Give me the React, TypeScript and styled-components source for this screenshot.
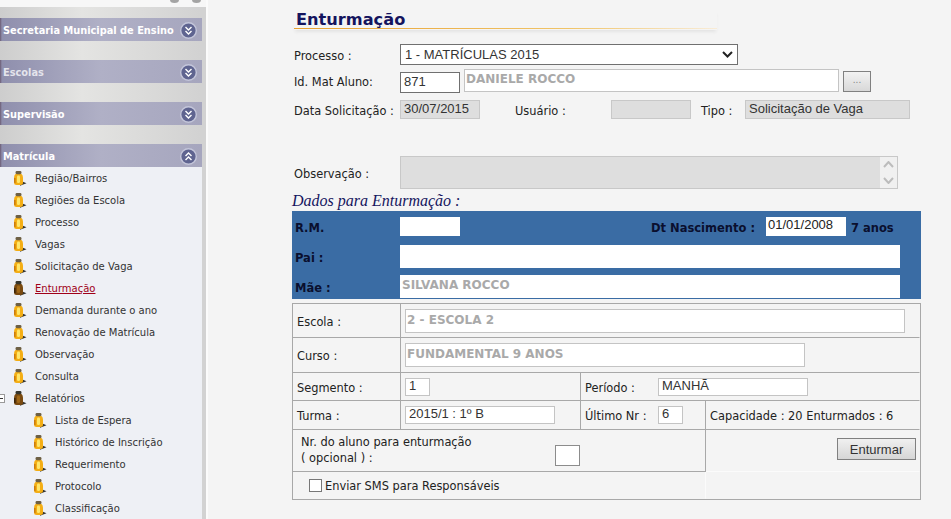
import React from "react";
import styled, { createGlobalStyle } from "styled-components";

const GlobalStyle = createGlobalStyle`
  html, body {
    margin: 0;
    padding: 0;
    background: #f4f4f4;
    overflow: hidden;
  }
  #root { height: 519px; }
`;

const LINE = "#a8a8a8";
const SOFT = "#fbfbfb";

const Page = styled.div`
  display: flex;
  width: 951px;
  height: 519px;
  overflow: hidden;
  font-family: "DejaVu Sans", Verdana, sans-serif;
  font-size: 11.4px;
  color: #222;
`;

const Sidebar = styled.aside`
  position: relative;
  width: 208px;
  flex: none;
  box-sizing: border-box;
  padding-top: 18px;
  height: 519px;
  overflow: hidden;
  border-right: 2px solid #fbfbfb;
  background:
    linear-gradient(#f7f7f7, #f7f7f7) top / 100% 7px no-repeat,
    linear-gradient(90deg, #cdcdcd 0, #e4e4e2 40%, #d2d2d2 97%);
`;

// two cut off badges peeking in at the very top
const TopBlob = styled.span<{ $x: number }>`
  position: absolute;
  top: -3px;
  left: ${(p) => p.$x}px;
  width: 9px;
  height: 6px;
  border-radius: 50%;
  background: #a4a4a4;
`;

const PanelHeader = styled.div<{ $dim?: boolean }>`
  display: flex;
  align-items: center;
  justify-content: space-between;
  width: 202px;
  height: 23px;
  box-sizing: border-box;
  padding: 1px 5px 0 3px;
  margin-bottom: 19px;
  background: linear-gradient(90deg, #6c5c74 0, #8f8fad 2px, #b0b0c6 50%, #a6a6be 100%);
  color: ${(p) => (p.$dim ? "#e4e4ec" : "#fff")};
  font-family: "DejaVu Sans Condensed", "DejaVu Sans", sans-serif;
  font-stretch: condensed;
  font-weight: bold;
  font-size: 10.9px;
  white-space: nowrap;
  &:last-of-type { margin-bottom: 0; }
`;

const MenuList = styled.ul`
  list-style: none;
  width: 202px;
  margin: 0;
  padding: 0;
  background: #eef0f5;
  height: 360px;
`;

const MenuItem = styled.li<{ $sub?: boolean }>`
  position: relative;
  display: flex;
  align-items: center;
  height: 22px;
  padding-left: ${(p) => (p.$sub ? "33px" : "13px")};
  color: #333;
  font-size: 10px;
  white-space: nowrap;
`;

const MenuLabel = styled.span<{ $active?: boolean }>`
  margin-left: 8px;
  color: ${(p) => (p.$active ? "#a00018" : "#333")};
  text-decoration: ${(p) => (p.$active ? "underline" : "none")};
`;

const Expander = styled.span`
  position: absolute;
  left: -4px;
  top: 7px;
  width: 7px;
  height: 7px;
  border: 1px solid #999;
  background: #fff;
  &::after {
    content: "";
    position: absolute;
    left: 1px;
    right: 1px;
    top: 3px;
    height: 1px;
    background: #333;
  }
`;

const Main = styled.main`
  flex: none;
  width: 630px;
  margin-left: 84px;
  padding-top: 10px;
`;

const TitleBlock = styled.div`
  width: 423px;
  margin-left: 2px;
  height: 20px;
  box-sizing: border-box;
  border-bottom: 1px solid transparent;
  background: linear-gradient(90deg, #e8a030, #f0c468 65%, #f8ecd8 100%) bottom / 100% 1px no-repeat;
  box-shadow: 0 3px 3px -1px #e4e4e4;
`;

const Title = styled.h1`
  margin: 0 0 0 2px;
  font-family: "DejaVu Sans", sans-serif;
  font-size: 16.2px;
  line-height: 20px;
  font-weight: bold;
  color: #14145e;
`;

const FormRow = styled.div<{ $h: number; $mt?: number }>`
  display: flex;
  align-items: center;
  height: ${(p) => p.$h}px;
  margin-top: ${(p) => p.$mt ?? 0}px;
  margin-left: 2px;
`;

const Label = styled.label<{ $w?: number; $ml?: number }>`
  flex: none;
  box-sizing: border-box;
  width: ${(p) => (p.$w ? `${p.$w}px` : "auto")};
  margin-left: ${(p) => p.$ml ?? 0}px;
  padding-top: 3px;
  color: #222;
  white-space: nowrap;
`;

const Field = styled.div<{ $w: number; $h: number; $ml?: number; $mt?: number; $tone?: "plain" | "disabled" | "dark" | "mid"; $bold?: boolean }>`
  flex: none;
  box-sizing: border-box;
  width: ${(p) => p.$w}px;
  height: ${(p) => p.$h}px;
  margin-left: ${(p) => p.$ml ?? 0}px;
  margin-top: ${(p) => p.$mt ?? 0}px;
  padding: 0 0 0 ${(p) => (p.$bold ? "1px" : "3px")};
  font-family: ${(p) => (p.$bold ? '"DejaVu Sans", sans-serif' : '"Liberation Sans", Arial, sans-serif')};
  font-size: ${(p) => (p.$bold ? "12px" : "13px")};
  font-weight: ${(p) => (p.$bold ? "bold" : "normal")};
  line-height: ${(p) => p.$h - 4}px;
  white-space: nowrap;
  overflow: hidden;
  color: ${(p) => (p.$bold ? "#a9a9a9" : "#333")};
  background: ${(p) => (p.$tone === "disabled" ? "#dedede" : "#fff")};
  border: 1px solid
    ${(p) =>
      p.$tone === "disabled"
        ? "#c8c8c8"
        : p.$tone === "dark"
          ? "#707070"
          : p.$tone === "mid"
            ? "#8c8c8c"
            : "#c4c4c4"};
`;

const SelectBox = styled.div`
  display: flex;
  align-items: center;
  justify-content: space-between;
  box-sizing: border-box;
  width: 338px;
  height: 21px;
  padding: 0 4px;
  background: #fff;
  border: 1px solid #707070;
  font-family: "Liberation Sans", Arial, sans-serif;
  font-size: 13px;
  color: #333;
`;

const DotsButton = styled.button`
  flex: none;
  box-sizing: border-box;
  width: 28px;
  height: 21px;
  margin: 3px 0 0 4px;
  padding: 0 0 4px;
  border: 1px solid #808080;
  background: linear-gradient(#f2f2f2, #d8d8d8);
  color: #888;
  font-size: 10px;
  line-height: 12px;
`;

const TextAreaBox = styled.div`
  display: flex;
  justify-content: flex-end;
  box-sizing: border-box;
  width: 498px;
  height: 33px;
  background: #dedede;
  border: 1px solid #c8c8c8;
`;

const ScrollTrack = styled.div`
  display: flex;
  flex-direction: column;
  align-items: center;
  justify-content: space-around;
  width: 17px;
  background: #f0f0f0;
`;

const SectionTitle = styled.h2`
  margin: 4px 0 0 0;
  height: 18px;
  font-family: "Liberation Serif", "Times New Roman", serif;
  font-style: italic;
  font-weight: normal;
  font-size: 16px;
  line-height: 16px;
  color: #14145e;
`;

const BluePanel = styled.section`
  box-sizing: border-box;
  width: 629px;
  height: 88px;
  background: #3a6ca4;
`;

const BlueRow = styled.div<{ $h: number; $pt: number }>`
  display: flex;
  align-items: center;
  box-sizing: border-box;
  height: ${(p) => p.$h}px;
  padding: ${(p) => p.$pt}px 0 0 3px;
`;

const BlueLabel = styled.span<{ $w?: number; $ml?: number }>`
  flex: none;
  width: ${(p) => (p.$w ? `${p.$w}px` : "auto")};
  margin-left: ${(p) => p.$ml ?? 0}px;
  padding-top: 2px;
  font-weight: bold;
  font-size: 11.5px;
  color: #0a0f2e;
  white-space: nowrap;
`;

const BlueField = styled.div<{ $w: number; $h: number; $ml?: number; $muted?: boolean }>`
  flex: none;
  box-sizing: border-box;
  width: ${(p) => p.$w}px;
  height: ${(p) => p.$h}px;
  margin-left: ${(p) => p.$ml ?? 0}px;
  padding-left: 2px;
  background: #fff;
  font-family: ${(p) => (p.$muted ? '"DejaVu Sans", sans-serif' : '"Liberation Sans", Arial, sans-serif')};
  font-size: ${(p) => (p.$muted ? "12px" : "13px")};
  font-weight: ${(p) => (p.$muted ? "bold" : "normal")};
  line-height: ${(p) => p.$h - 3}px;
  color: ${(p) => (p.$muted ? "#a9a9a9" : "#222")};
`;

const EnrolGrid = styled.div`
  display: grid;
  grid-template-columns: 108px 180px 125px 214px;
  grid-template-rows: 34px 35px 28px 29px 42px 27px;
  width: 629px;
  margin-top: 4px;
  box-sizing: border-box;
  border: 1px solid ${LINE};
`;

const Cell = styled.div<{ $span?: number; $pad?: number; $right?: string; $bottom?: string }>`
  display: flex;
  align-items: center;
  box-sizing: border-box;
  grid-column: span ${(p) => p.$span ?? 1};
  min-width: 0;
  padding-left: ${(p) => p.$pad ?? 4}px;
  border-right: 1px solid ${(p) => p.$right ?? LINE};
  border-bottom: 1px solid ${(p) => p.$bottom ?? LINE};
`;

const CellText = styled.span<{ $w?: number }>`
  flex: none;
  width: ${(p) => (p.$w ? `${p.$w}px` : "auto")};
  padding-top: 2px;
  color: #222;
  white-space: nowrap;
`;

const TwoLine = styled.div`
  flex: none;
  box-sizing: border-box;
  width: 262px;
  padding: 0 0 2px 8px;
  line-height: 16px;
`;

const EnrolButton = styled.button`
  box-sizing: border-box;
  width: 79px;
  height: 22px;
  margin: -3px 3px 0 auto;
  padding: 0;
  border: 1px solid #808080;
  background: linear-gradient(#f0f0f0, #d6d6d6);
  color: #333;
  font-family: "Liberation Sans", Arial, sans-serif;
  font-size: 13px;
`;

const CheckBox = styled.span`
  flex: none;
  box-sizing: border-box;
  width: 13px;
  height: 13px;
  margin: 0 3px 0 0;
  border: 1px solid #777;
  background: #fff;
`;

// little bottle figure used in the tree menu
function TreeIcon({ dark }: { dark?: boolean }) {
  const body = dark ? "#7a4a10" : "#f4ae14";
  const head = dark ? "#35352c" : "#6e6044";
  return (
    <svg width="14" height="16" viewBox="0 0 14 16" style={{ flex: "none" }}>
      <path d="M7 10.5l6.5 2.7L7 15.8z" fill="#33332e" />
      <path d="M3 3.5h5Q10 5 10 7.5v5q0 2.5-2.5 2.5h-4Q1 15 1 12.5v-5Q1 5 3 3.5z" fill={body} />
      <path d="M1 8h1.6v5.5L1 12.5z" fill={dark ? "#3a2408" : "#cc7c0c"} />
      <rect x="4" y="5.5" width="3" height="7.5" rx="1.2" fill={dark ? "#a06818" : "#ffe66a"} />
      <rect x="2.5" y="1" width="6" height="3.2" rx="1.4" fill={head} />
    </svg>
  );
}

function ChevronBadge({ up }: { up?: boolean }) {
  return (
    <svg width="17" height="17" viewBox="0 0 17 17" style={{ flex: "none" }}>
      <circle cx="8.5" cy="8.5" r="7.8" fill="#5f6490" stroke="#c4c6da" strokeWidth="1.4" />
      <path
        d={up ? "M5.5 8l3-3 3 3M5.5 12l3-3 3 3" : "M5.5 5l3 3 3-3M5.5 9l3 3 3-3"}
        fill="none"
        stroke="#fff"
        strokeWidth="1.4"
      />
    </svg>
  );
}

const SelectArrow = () => (
  <svg width="11" height="7" viewBox="0 0 11 7">
    <path d="M1 1l4.5 4.5L10 1" fill="none" stroke="#222" strokeWidth="2" />
  </svg>
);

const ScrollArrow = ({ up }: { up?: boolean }) => (
  <svg width="11" height="7" viewBox="0 0 11 7">
    <path d={up ? "M1 6l4.5-5L10 6" : "M1 1l4.5 5L10 1"} fill="none" stroke="#bcbcbc" strokeWidth="2" />
  </svg>
);

const topItems = [
  "Região/Bairros",
  "Regiões da Escola",
  "Processo",
  "Vagas",
  "Solicitação de Vaga",
  "Enturmação",
  "Demanda durante o ano",
  "Renovação de Matrícula",
  "Observação",
  "Consulta",
  "Relatórios",
];

const subItems = ["Lista de Espera", "Histórico de Inscrição", "Requerimento", "Protocolo", "Classificação"];

function App() {
  return (
    <Page>
      <GlobalStyle />
      <Sidebar>
        <TopBlob $x={170} />
        <TopBlob $x={192} />
        <PanelHeader>
          Secretaria Municipal de Ensino
          <ChevronBadge />
        </PanelHeader>
        <PanelHeader $dim>
          Escolas
          <ChevronBadge />
        </PanelHeader>
        <PanelHeader>
          Supervisão
          <ChevronBadge />
        </PanelHeader>
        <PanelHeader>
          Matrícula
          <ChevronBadge up />
        </PanelHeader>
        <MenuList>
          {topItems.map((item) => (
            <MenuItem key={item}>
              {item === "Relatórios" && <Expander />}
              <TreeIcon dark={item === "Enturmação" || item === "Relatórios"} />
              <MenuLabel $active={item === "Enturmação"}>{item}</MenuLabel>
            </MenuItem>
          ))}
          {subItems.map((item) => (
            <MenuItem key={item} $sub>
              <TreeIcon />
              <MenuLabel>{item}</MenuLabel>
            </MenuItem>
          ))}
        </MenuList>
      </Sidebar>
      <Main>
        <TitleBlock>
          <Title>Enturmação</Title>
        </TitleBlock>
        <FormRow $h={21} $mt={14}>
          <Label $w={106}>Processo :</Label>
          <SelectBox>
            1 - MATRÍCULAS 2015
            <SelectArrow />
          </SelectBox>
        </FormRow>
        <FormRow $h={24} $mt={3}>
          <Label $w={106}>Id. Mat Aluno:</Label>
          <Field $w={60} $h={21} $mt={5} $tone="dark">871</Field>
          <Field $w={375} $h={23} $ml={4} $mt={1} $bold>DANIELE ROCCO</Field>
          <DotsButton>...</DotsButton>
        </FormRow>
        <FormRow $h={19} $mt={8}>
          <Label $w={106}>Data Solicitação :</Label>
          <Field $w={80} $h={19} $tone="disabled">30/07/2015</Field>
          <Label $w={96} $ml={35}>Usuário :</Label>
          <Field $w={80} $h={19} $tone="disabled" />
          <Label $w={44} $ml={10}>Tipo :</Label>
          <Field $w={165} $h={19} $tone="disabled">Solicitação de Vaga</Field>
        </FormRow>
        <FormRow $h={33} $mt={37}>
          <Label $w={106}>Observação :</Label>
          <TextAreaBox>
            <ScrollTrack>
              <ScrollArrow up />
              <ScrollArrow />
            </ScrollTrack>
          </TextAreaBox>
        </FormRow>
        <SectionTitle>Dados para Enturmação :</SectionTitle>
        <BluePanel>
          <BlueRow $h={25} $pt={6}>
            <BlueLabel $w={105}>R.M.</BlueLabel>
            <BlueField $w={60} $h={19} />
            <BlueLabel $ml={191}>Dt Nascimento :</BlueLabel>
            <BlueField $w={80} $h={19} $ml={11}>01/01/2008</BlueField>
            <BlueLabel $ml={5}>7 anos</BlueLabel>
          </BlueRow>
          <BlueRow $h={32} $pt={9}>
            <BlueLabel $w={105}>Pai :</BlueLabel>
            <BlueField $w={500} $h={23} />
          </BlueRow>
          <BlueRow $h={30} $pt={7}>
            <BlueLabel $w={105}>Mãe :</BlueLabel>
            <BlueField $w={500} $h={23} $muted>SILVANA ROCCO</BlueField>
          </BlueRow>
        </BluePanel>
        <EnrolGrid>
          <Cell><CellText>Escola :</CellText></Cell>
          <Cell $span={3} $right="transparent">
            <Field $w={500} $h={24} $bold>2 - ESCOLA 2</Field>
          </Cell>
          <Cell><CellText>Curso :</CellText></Cell>
          <Cell $span={3} $right="transparent">
            <Field $w={400} $h={24} $bold>FUNDAMENTAL 9 ANOS</Field>
          </Cell>
          <Cell><CellText>Segmento :</CellText></Cell>
          <Cell>
            <Field $w={25} $h={18}>1</Field>
          </Cell>
          <Cell $span={2} $right="transparent">
            <CellText $w={73}>Período :</CellText>
            <Field $w={150} $h={18}>MANHÃ</Field>
          </Cell>
          <Cell><CellText>Turma :</CellText></Cell>
          <Cell>
            <Field $w={150} $h={18}>2015/1 : 1º B</Field>
          </Cell>
          <Cell>
            <CellText $w={73}>Último Nr :</CellText>
            <Field $w={25} $h={18}>6</Field>
          </Cell>
          <Cell $right="transparent">
            <CellText>Capacidade : 20 Enturmados : 6</CellText>
          </Cell>
          <Cell $span={3} $pad={0}>
            <TwoLine>
              Nr. do aluno para enturmação
              <br />( opcional ) :
            </TwoLine>
            <Field $w={25} $h={21} $mt={10} $tone="mid" />
          </Cell>
          <Cell $right="transparent" $bottom={SOFT}>
            <EnrolButton>Enturmar</EnrolButton>
          </Cell>
          <Cell $span={3} $pad={16} $right={SOFT} $bottom="transparent">
            <CheckBox />
            <CellText>Enviar SMS para Responsáveis</CellText>
          </Cell>
          <Cell $right="transparent" $bottom="transparent" />
        </EnrolGrid>
      </Main>
    </Page>
  );
}

export default App;
